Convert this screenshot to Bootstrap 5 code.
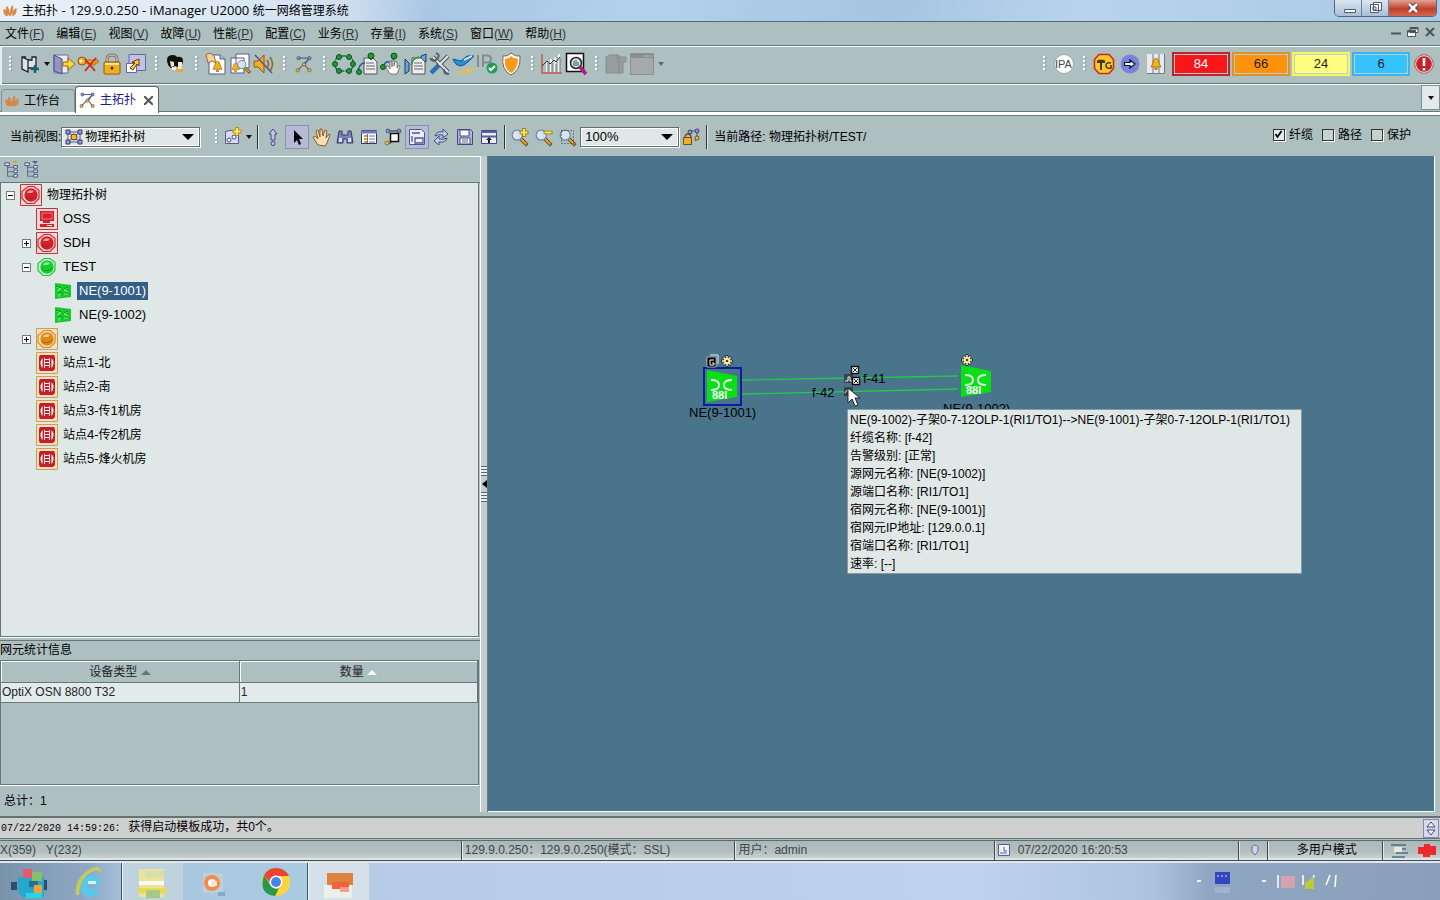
<!DOCTYPE html>
<html lang="zh-CN">
<head>
<meta charset="utf-8">
<meta name="viewport" content="width=device-width, initial-scale=1">
<title>主拓扑 - 129.9.0.250 - iManager U2000 统一网络管理系统</title>
<link href="https://cdn.jsdelivr.net/npm/bootstrap@5.3.0/dist/css/bootstrap.min.css" rel="stylesheet">
<style>
:root{--face:#adbfbe;--edge:#66787a;--pane:#e0e7e7;--map:#4a748b;--sel:#335f87}
body{font-family:"Liberation Sans","Noto Sans CJK SC",sans-serif;font-size:12px;line-height:18px;color:#000;background:var(--face);white-space:nowrap;overflow-x:hidden}
svg{display:block;flex:none}
.en{font-size:13px}
a{color:inherit;text-decoration:none}
.titlebar{height:22px;padding-left:3px;background:linear-gradient(100deg,#e9f1f8 0,#dde9f5 14%,#cfdff0 24%,#a9c6e4 30%,#b3d0ec 45%,#a6c5e3 62%,#b9d3ec 75%,#a9c9e6 100%);border-bottom:1px solid #55687a;font-family:"Open Sans","Noto Sans CJK SC",sans-serif}
.winbtns{height:17px;align-self:flex-start;border:1px solid #55677a;border-top:0;border-radius:0 0 5px 5px;overflow:hidden;margin-right:3px}
.winbtns .btn{border:0;border-radius:0;padding:0;height:16px;width:27px;background:linear-gradient(#dbe6f1,#a9bfd5);border-right:1px solid #6e8297}
.winbtns .btn.win-close{width:47px;border:0;background:linear-gradient(#e2a293,#c0402c 55%,#d5674e)}
.btn{--bs-btn-border-radius:0;--bs-btn-padding-x:0;--bs-btn-padding-y:0;--bs-btn-font-size:12px}
.menubar{height:25px;padding-left:5px;border-bottom:1px solid #fff;box-shadow:inset 0 -1px var(--edge)}
.menubar .nav-link{padding:0;margin-right:12px;color:#000;line-height:24px}
.menubar .nav-link span{color:#333}
.toolbar{height:38px;border-bottom:1px solid #fff;border-left:2px solid #e8eeee;box-shadow:inset 0 -1px var(--edge)}
.tool{width:24px;height:24px;display:flex;align-items:center;justify-content:center;border:0;background:none}
.tool.wide{width:28px}
.tool.slim{width:10px}
.tool.on{background:#b7bad6;border:1px solid #8c8fb4}
.grip{width:16px;height:16px;background:repeating-linear-gradient(#fff 0 2px,transparent 2px 4px) 7px 0/2px 16px no-repeat,repeating-linear-gradient(#8c9c9c 0 2px,transparent 2px 4px) 9px 1px/1px 16px no-repeat}
.viewbar .grip{width:12px}
.caret-down{width:0;border:3px solid transparent;border-top:4px solid #111;border-bottom:0}
.vsep{width:2px;height:24px;border-left:1px solid #333;border-right:1px solid #dfe8e8;margin:0 2px 0 3px}
.alarm{width:58px;height:24px;margin-right:2px;padding:2px;background:var(--frame);border:0}
.alarm span{display:block;height:20px;line-height:18px;border:1px solid #bcc;background:var(--fill);font-size:13px;color:#222}
.tabstrip{height:31px;padding-left:1px;border-bottom:1px solid var(--edge);background:linear-gradient(#fff,#fff) 0 100%/100% 3px no-repeat,linear-gradient(var(--edge),var(--edge)) 0 26px/100% 1px no-repeat}
.tabstrip .nav-link{border:1px solid #84959a;border-bottom:0;border-radius:4px 4px 0 0;padding:0 0 0 3px;color:#000;height:23px;width:74px;display:flex;align-items:center;background:var(--face);margin:0;align-self:flex-start;margin-top:4px}
.tabstrip .nav-link.active{background:#fff;border-color:#56666c;color:#1a1a8c;width:84px;height:27px;margin-top:1px}
.tabmenu{width:19px;height:25px;background:#e4e9e9;border:1px solid #808f92}
.viewbar{height:40px;padding:2px 0 0 10px}
.pickwrap{position:relative;border:1px solid #5f7071;box-shadow:inset 0 0 0 1px #fff,1px 1px #fff;height:20px;background:var(--pane)}
.pickwrap::after{content:"";position:absolute;right:5px;top:6px;border:6px solid transparent;border-top-color:#000;border-bottom:0;pointer-events:none}
.pickwrap svg{position:absolute;left:3px;top:1px;pointer-events:none}
.pickwrap .form-select{border:0;background:none;border-radius:0;padding:0 20px 0 4px;height:18px;line-height:18px;font-size:12px;color:#000;width:100%}
.pickwrap .form-select.en{font-size:13px}
.pickwrap .form-select.iconed{padding-left:23px}
.viewpick{width:139px}
.zoompick{width:99px}
.optbox{gap:9px;padding:0 29px 5px 0}
.optbox .form-check-input{width:12px;height:12px;margin:0 4px 0 0;float:none;border:1px solid #333;border-radius:0;background-color:#c4d2d0;box-shadow:1px 1px #fff}
.optbox .form-check-input:checked{background-color:#e6ecec;background-image:url("data:image/svg+xml,%3Csvg xmlns='http://www.w3.org/2000/svg' viewBox='0 0 9 9'%3E%3Cpath d='M1.5 4l2 3 4-6' fill='none' stroke='%23000' stroke-width='1.8'/%3E%3C/svg%3E");background-size:9px}
.sidepane{width:481px;border-top:1px solid #fff;border-right:1px solid #fff}
.treebar{height:26px;border-bottom:1px solid var(--edge);padding:0 4px}
.treebox{border:1px solid var(--edge);border-top:0;background:var(--pane);flex:1 1 auto;margin-right:1px;box-shadow:0 1px #fff;overflow:hidden}
.treebox ul{list-style:none;margin:0;padding:0}
.treebox ul ul{padding-left:16px}
.trow{height:24px;display:flex;align-items:center;padding-left:5px}
.twist{width:9px;height:9px;border:1px solid #777;background:#fff;padding:0;margin-right:5px;display:block;position:relative}
.twist::before,.twist.plus::after{content:"";position:absolute;left:1px;top:3px;width:5px;height:1px;background:#000}
.twist.plus::after{transform:rotate(90deg)}
.leaf{width:14px;flex:none}
.trow a{padding:0 2px;margin-left:3px;height:18px}
.trow a.picked{background:var(--sel);color:#fff}
.statpane{margin-top:3px;border-top:1px solid var(--edge);flex:0 0 172px}
.stattitle{height:19px;line-height:19px}
.gridbox{height:125px;border:1px solid var(--edge);box-shadow:0 1px #fff;margin-right:1px}
.gridbox .table{--bs-table-bg:transparent;margin:0;table-layout:fixed;line-height:18px}
.gridbox th{font-weight:400;padding:0;height:21px;line-height:20px;text-align:center;background:var(--face);border:solid var(--edge);border-width:0 1px 1px 0;box-shadow:inset 1px 1px #fff}
.gridbox td{padding:0 0 0 1px;height:20px;background:#e2eaea;border:solid var(--edge);border-width:0 1px 1px 0}
.sortmark{display:inline-block;border:5px solid transparent;border-top:0;border-bottom-color:#66787a;vertical-align:1px}
.sortmark.pale{border-bottom-color:#f2f7f7}
.statsum{padding:7px 4px 0}
.splitter{width:7px;background:#c3cccd;border-right:1px solid #6e767e;display:flex;flex-direction:column;align-items:center;justify-content:center}
.splitter .ridge{width:6px;height:10px;background:repeating-linear-gradient(#5a686a 0 1px,#e6eded 1px 3px)}
.splitter .arrow{border:4px solid transparent;border-right:5px solid #000;border-left:0;margin:4px 0}
.mapview{background:var(--map);position:relative;overflow:hidden;border-right:1px solid #fff;border-bottom:1px solid #fff;margin-right:5px}
.mapview>*{position:absolute}
.mapnode{width:64px;text-align:center;line-height:14px}
.tip{left:360px;top:254px;padding:1px 3px 0 2px;min-width:453px;background:var(--pane);box-shadow:0 0 0 1px #8c9a9e}
.msgbar{height:23px;margin-top:4px;padding-left:1px;border-top:2px solid #657173;border-bottom:1px solid #6a7376;background:#cfd0d0}
.msgbar .stamp{font-family:"Liberation Mono","Noto Sans CJK SC",monospace;font-size:10px}
.spin{width:16px;height:19px;margin-right:1px;background:#d7d9ef;border:1px solid #8587aa}
.statusbar{height:21px;margin-top:1px;border-bottom:1px solid #3f4e50;box-shadow:inset 0 1px #5f6c6f,inset 0 -2px #dfe5e5;background:linear-gradient(#a9b8b7,#b4c0bf 60%,#cfd6d6);color:#3b4747}
.cell{border-left:1px solid #3f4a4c;box-shadow:inset 1px 0 #e4eaea;padding-left:3px;height:19px;overflow:hidden;display:flex;align-items:center}
.c-xy{width:32%}.c-host{width:19%}.c-time{width:17%}.c-lock{width:2%}.c-mode{width:8%}.c-net{width:4%}
.taskbar{height:39px;border-top:2px solid #dfe7ec;background:linear-gradient(90deg,#7893aa 0,#8fa7c4 6%,#a9c6e0 9%,#a9cbe0 21%,#c5d6e8 25.4%,#b6cbe6 25.6%,#bad0ea 50%,#bcd2ee 68%,#adc4df 80%,#8fa6c2 84%,#8aa0ba 100%)}
.taskbar .btn{border:0;height:37px;width:62px;display:flex;align-items:center;justify-content:center;border-radius:0}
.taskbar .btn:first-child{width:59px}
.taskbar .btn.framed{border-left:1px solid #42525e;box-shadow:inset 1px 0 #eef4f8;background:#bfd3df}
.taskbar .btn.current{background:#d5e0ea}
</style>
</head>
<body class="d-flex flex-column min-vh-100">

<svg width="0" height="0" class="position-absolute" aria-hidden="true">
  <symbol id="flame" viewBox="0 0 16 14"><path d="M1 5q3 1 4 7Q0 12 1 5zM4 2q3 3 3 10Q2 8 4 2zM8 12Q7 6 10 1q2 5-2 11zM10 12q0-6 4-8 1 7-4 8z" fill="#eb8b35" stroke="#c66a2a" stroke-width=".5"/></symbol>
  <symbol id="topo" viewBox="0 0 20 20"><path d="M4 3.500h12L3 17M10 10l6 7M16 3.500l-5 7" fill="none" stroke="#555f9a" stroke-width="1.2"/><g fill="#8d95c4" stroke="#3b406e" stroke-width=".8"><circle cx="4" cy="3.500" r="1.800"/><circle cx="16" cy="3.500" r="1.800"/></g><g fill="#f2bd34" stroke="#704e18" stroke-width=".8"><circle cx="10" cy="10.500" r="1.800"/><circle cx="3" cy="17" r="1.800"/><circle cx="16" cy="17" r="1.800"/></g></symbol>
  <symbol id="ball" viewBox="0 0 22 22"><path d="M8 2.5h6l5 4v8l-5 5H7l-5-5v-7z" fill="none" stroke="currentColor" stroke-width="1.2"/><circle cx="11" cy="11" r="6.7" fill="currentColor"/><path d="M7 9q1-4 7-2l-2 2z" fill="#fff" opacity=".55"/><path d="M6 13q5 4 10-1" fill="none" stroke="#522" stroke-width=".8" opacity=".5"/></symbol>
  <symbol id="boxed" viewBox="0 0 22 22"><path d="M.5.5h21v21H.5z" fill="#f3d9d6" stroke="#c6303a"/><use href="#ball"/></symbol>
  <symbol id="site" viewBox="0 0 22 22"><path d="M.5.5h21v21H.5z" fill="#efe0c6" stroke="#d99a45"/><path d="M4 3h14l1 2v12l-2 2H4l-1-2V5z" fill="#c61f2a"/><path d="M6.500 6q-4 5 0 10zM15.500 6q4 5 0 10z" fill="#fff"/><path d="M8.500 6v10m5-10v10" stroke="#fff" stroke-width=".8"/><path d="M9 7.500h4M9 10.500h4M9 13.500h4" stroke="#fff"/></symbol>
  <symbol id="nemini" viewBox="0 0 18 18"><path d="M1 1l16 2v12L1 17z" fill="#16c92b"/><path d="M3 5l4 2-4 2m10-3-3 2 4 2M4 12h3m3 0h4M4 14h2" stroke="#8fee8f" fill="none"/><path d="M2 4l5 2m3 1 4-2M4 11h4m3 0h3" stroke="#0b7d18" stroke-width=".8"/></symbol>
  <symbol id="ne" viewBox="0 0 32 34"><path d="M1 1l30 6v21L1 33z" fill="#08df17"/><path d="M5 11q8 0 8 5t-8 5M26 11q-8 0-8 5t8 5" fill="none" stroke="#e9ffe9" stroke-width="1.8"/></symbol>
  <symbol id="gear" viewBox="0 0 12 12"><path d="M6 0v12M0 6h12M2 2l8 8m0-8-8 8" stroke="#33331e" stroke-width="2.600"/><path d="M6 1v10M1 6h10M2.500 2.500l7 7m0-7-7 7" stroke="#f8f2b8" stroke-width="1.500"/><circle cx="6" cy="6" r="3" fill="#f8f2b8"/><circle cx="6" cy="6" r="1.300" fill="#41412d"/></symbol>
  <symbol id="doc" viewBox="0 0 24 24"><path d="M8 6h9l4 4v12H8z" fill="#eee" stroke="#555"/><path d="M10 11h8M10 14h9M10 17h9" stroke="#666"/></symbol>
  <symbol id="lens" viewBox="0 0 24 24"><path d="M13 14l7 7" stroke="#6c4a16" stroke-width="4"/><path d="M13 14l6 6" stroke="#e9a837" stroke-width="2"/><circle cx="9" cy="10" r="5.500" fill="#d6e5f5" stroke="#7180a5" stroke-width="1.300"/></symbol>
  <symbol id="bell" viewBox="0 0 12 12"><path d="M6 0q3 1 3 5l2 4H1l2-4q0-4 3-5zM5 10h2v2H5z" fill="#f6b21b" stroke="#8d5a0d" stroke-width=".7"/></symbol>
  <symbol id="treeic" viewBox="0 0 18 20"><path d="M4 4v13h7M4 7h7M4 12h7" fill="none" stroke="#566295"/><path d="M1 2h5v3H1zM11 5h4v3h-4zM11 10h4v3h-4zM11 15h4v3h-4z" fill="#e9ecf8" stroke="#3c4678"/></symbol>
</svg>

<header>
  <div class="titlebar d-flex align-items-center">
    <svg class="me-1" width="15" height="14"><use href="#flame"/></svg>
    <div>主拓扑<span class="en"> - 129.9.0.250 - iManager U2000 </span>统一网络管理系统</div>
    <div class="winbtns d-flex ms-auto">
      <button class="btn" aria-label="最小化"><svg width="27" height="16"><path d="M9.500 9.500h11v3h-11z" fill="#fff" stroke="#4d5b6b"/></svg></button>
      <button class="btn" aria-label="还原"><svg width="27" height="16"><path d="M11.500 2.500h8v8h-8zM8.500 4.500h8v8h-8zM11 7h3v3h-3z" fill="#f6f8fa" stroke="#4d5b6b"/></svg></button>
      <button class="btn win-close" aria-label="关闭"><svg width="47" height="16"><path d="M20 4l8 8m0-8-8 8" stroke="#5c2c2c" stroke-width="4.500"/><path d="M20 4l8 8m0-8-8 8" stroke="#fff" stroke-width="2.600"/></svg></button>
    </div>
  </div>

  <nav class="menubar d-flex align-items-start">
    <div class="nav flex-nowrap">
      <a class="nav-link" href="#">文件<span>(<u>F</u>)</span></a>
      <a class="nav-link" href="#">编辑<span>(<u>E</u>)</span></a>
      <a class="nav-link" href="#">视图<span>(<u>V</u>)</span></a>
      <a class="nav-link" href="#">故障<span>(<u>U</u>)</span></a>
      <a class="nav-link" href="#">性能<span>(<u>P</u>)</span></a>
      <a class="nav-link" href="#">配置<span>(<u>C</u>)</span></a>
      <a class="nav-link" href="#">业务<span>(<u>R</u>)</span></a>
      <a class="nav-link" href="#">存量<span>(<u>I</u>)</span></a>
      <a class="nav-link" href="#">系统<span>(<u>S</u>)</span></a>
      <a class="nav-link" href="#">窗口<span>(<u>W</u>)</span></a>
      <a class="nav-link" href="#">帮助<span>(<u>H</u>)</span></a>
    </div>
    <svg class="ms-auto mt-1 me-1" width="46" height="14"><path d="M1 7.500h10" stroke="#4b5657" stroke-width="2"/><path d="M20 1.500h8v5h-8zM17.500 4.500h8v6h-8z" fill="#fff" stroke="#4b5657"/><path d="M17 5.500h9M20 2.500h8" stroke="#4b5657" stroke-width="2"/><path d="M36 2l8 8m0-8-8 8" stroke="#4b5657" stroke-width="2"/></svg>
  </nav>

  <div class="toolbar d-flex align-items-center pb-1">
    <i class="grip"></i>
    <button class="tool btn" aria-label="新建"><svg width="24" height="24"><path d="M8 5H4v12l6 3V8l-6-3M10 8h4V5h4v11h-8" fill="#dce3ee" stroke="#222" stroke-width="1.300"/><path d="M17 13v8M13 17h8" stroke="#17626d" stroke-width="2.500"/></svg></button>
    <button class="tool slim btn" aria-label="更多"><i class="caret-down"></i></button>
    <button class="tool btn" aria-label="注销"><svg width="24" height="24"><path d="M2 3h14v18H2z" fill="#eceaf8" stroke="#6c6c90"/><path d="M2 3l8 4v15l-8-3z" fill="#8f93c6" stroke="#4b4e7c"/><path d="M11 10h5V6l7 6-7 6v-4h-5z" fill="#ffd733" stroke="#8c6d12"/></svg></button>
    <button class="tool btn" aria-label="取消锁定"><svg width="24" height="24"><circle cx="6" cy="9" r="4" fill="#f6ac1d" stroke="#8d5a0d"/><circle cx="5" cy="9" r="1.500" fill="#fff"/><path d="M10 8h12v3h-3v2h-3v-2h-6z" fill="#f6ac1d" stroke="#8d5a0d" stroke-width=".7"/><path d="M9 7l10 12M20 6L9 19" stroke="#d8201a" stroke-width="1.800"/></svg></button>
    <button class="tool btn" aria-label="锁定"><svg width="24" height="24"><path d="M7 11V7q0-4 5-4t5 4v4" fill="none" stroke="#7c7360" stroke-width="3"/><path d="M7 11V7q0-4 5-4t5 4v4" fill="none" stroke="#e2dccb"/><rect x="4" y="10" width="16" height="12" rx="1" fill="#f2ad23" stroke="#8a5c10"/><path d="M5 12h14" stroke="#ffe08c" stroke-width="2"/><circle cx="12" cy="16" r="1.500" fill="#4e3206"/></svg></button>
    <button class="tool btn" aria-label="切换"><svg width="24" height="24"><path d="M5 2.500h16.500v16H5z" fill="#c0c1e4" stroke="#6466a0"/><path d="M2.500 11.500h10v9h-10z" fill="#fff" stroke="#6466a0"/><path d="M6 16l5-5-3-1 7-3v7l-2-2-4 6z" fill="#ffc83a" stroke="#5a3a10"/></svg></button>
    <i class="grip"></i>
    <button class="tool btn" aria-label="用户"><svg width="24" height="24"><path d="M3 8q0-5 6-5 3 0 4 2 6-1 6 4v6h-5l-3-1-4 2q-4-3-4-8z" fill="#111"/><path d="M6 9l4 1v4l-3 1zM14 10h4l1 4-2 3h-3z" fill="#f5e6c8"/><path d="M8 15h4v3H8z" fill="#e9f2f4"/><path d="M12 17h7v3h-7z" fill="#e0ab40"/></svg></button>
    <i class="grip"></i>
    <button class="tool btn" aria-label="当前告警"><svg width="24" height="24"><path d="M5 3h11l5 4v15H5z" fill="#fff" stroke="#555a88"/><path d="M16 3v4h5" fill="#b9bfe0" stroke="#555a88"/><path d="M2 3q4-4 8 1l2 7-4-2-4 2z" fill="#f3cfa2" stroke="#a56833"/><use href="#bell" x="8" y="9" width="11" height="11"/></svg></button>
    <button class="tool btn" aria-label="浏览告警"><svg width="24" height="24"><path d="M8 2h13v14H8zM3 6h13v15H3z" fill="#fff" stroke="#555a88"/><use href="#bell" x="3" y="11" width="9" height="9"/><use href="#lens" x="7" y="5" width="18" height="18"/></svg></button>
    <button class="tool btn" aria-label="静音"><svg width="24" height="24"><path d="M2 9h4l6-6v18l-6-6H2z" fill="#f5ae23" stroke="#8d5a0d"/><path d="M15 8q3 4 0 8m3-11q5 7 0 14" fill="none" stroke="#9a6410" stroke-width="1.500"/><path d="M3 3l17 18" stroke="#50549a" stroke-width="1.500"/></svg></button>
    <i class="grip"></i>
    <button class="tool btn" aria-label="主拓扑"><svg width="18" height="18"><use href="#topo"/></svg></button>
    <i class="grip"></i>
    <button class="tool btn" aria-label="环网"><svg width="24" height="24"><rect x="3" y="4" width="18" height="15" rx="6" fill="none" stroke="#2d5d84" stroke-width="1.500" stroke-dasharray="5 1"/><g fill="#1f9c2e" stroke="#0a5116"><circle cx="7" cy="5" r="2.500"/><circle cx="17" cy="5" r="2.500"/><circle cx="3" cy="12" r="2.500"/><circle cx="21" cy="12" r="2.500"/><circle cx="7" cy="19" r="2.500"/><circle cx="17" cy="19" r="2.500"/></g></svg></button>
    <button class="tool btn" aria-label="路径管理"><svg width="24" height="24"><use href="#doc" width="24" height="24"/><path d="M2 20q1-9 7-9M15 4v4" fill="none" stroke="#245b9a" stroke-width="1.500"/><g fill="#1f9c2e" stroke="#0a5116"><circle cx="3" cy="20" r="2.500"/><circle cx="15" cy="4" r="3"/></g></svg></button>
    <button class="tool btn" aria-label="路径创建"><svg width="24" height="24"><path d="M3 15q2-6 6-5 5 1 5-6" fill="none" stroke="#245b9a" stroke-width="1.500"/><g fill="#1f9c2e" stroke="#0a5116"><circle cx="3" cy="15" r="2.500"/><circle cx="14" cy="4" r="3"/></g><path d="M10 22l-4-7 2-1 2 3V9h2v6-7h2v6l1-5 2 1v6l2-3 1 1-3 8z" fill="#fff" stroke="#666" stroke-width=".8"/></svg></button>
    <button class="tool btn" aria-label="路径文档"><svg width="24" height="24"><path d="M1 7l4 4v8l-4 3zM17 4l5-2v8l-5-2z" fill="#6ea5d9" stroke="#173b6e"/><use href="#doc" width="24" height="24"/><path d="M7 13q2-7 8-8" stroke="#209a38" fill="none" stroke-width="1.500"/></svg></button>
    <button class="tool btn" aria-label="工具"><svg width="24" height="24"><path d="M5 5l15 15M20 4L4 20" stroke="#48525d" stroke-width="4"/><path d="M5 5l15 15M20 4L11 13" stroke="#e3e7eb" stroke-width="2"/><path d="M10 14l-7 7" stroke="#2275bd" stroke-width="4"/><path d="M2 6q3 5 7 1t-1-6M16 17q-1 5 5 5" fill="none" stroke="#56606a" stroke-width="2"/></svg></button>
    <button class="tool btn" aria-label="巡检"><svg width="24" height="24"><path d="M2 19q8 1 12-2l9-2q-2 6-11 7-6 0-10-3z" fill="#dfc060"/><path d="M1 7l8 2 6-5h7l-5 5q-5 5-9 5-5-1-7-7z" fill="#2a8ed0" stroke="#13578c"/><path d="M12 8l8-4" stroke="#dff0ff" stroke-width="1.500"/></svg></button>
    <button class="tool btn" aria-label="IP"><svg width="24" height="24"><path d="M2 3v12M7 15V3.500h4q4 0 4 3.500t-4 3.500H8" fill="none" stroke="#858b91" stroke-width="2"/><circle cx="16" cy="16" r="5.500" fill="#1f9f54"/><path d="M13 16l2 2 4-4" fill="none" stroke="#fff" stroke-width="2"/></svg></button>
    <button class="tool btn" aria-label="安全"><svg width="24" height="24"><path d="M11 1q4 4 9 3 1 14-9 19Q1 18 3 4q5 1 8-3z" fill="#fff" stroke="#786650"/><path d="M11 4q3 3 7 2.500Q18 17 11 21 4 17 5 6.500 9 7 11 4z" fill="#fa9819"/></svg></button>
    <i class="grip"></i>
    <button class="tool btn" aria-label="性能"><svg width="24" height="24"><path d="M2 2v19h20" stroke="#c05a46" fill="none" stroke-width="1.500"/><path d="M7 20V9m4 11V7m4 13V5m4 15V2" stroke="#eef2f2" stroke-width="2"/><path d="M2 14l5-5 3 3 4-4 2 2 4-5" fill="none" stroke="#333"/><path d="M8 20V10m4 10v-9m4 9v-8m4 8V6" stroke="#777"/></svg></button>
    <button class="tool btn" aria-label="查询"><svg width="24" height="24"><path d="M2.500 1.500h17v18h-17z" fill="#fff" stroke="#111" stroke-width="1.500"/><circle cx="12" cy="11" r="5.500" fill="#cfe1e9" stroke="#222" stroke-width="1.500"/><path d="M10 14V9m2 5V8m2 6v-4" stroke="#456"/><path d="M16 15l6 7" stroke="#b51b85" stroke-width="3.500"/></svg></button>
    <i class="grip"></i>
    <button class="tool btn" aria-label="部署" disabled><svg width="24" height="24"><path d="M2 5l4-2h9v18H2zM13 5h9v5h-3v11h-4V10h-2z" fill="#8c8c8c" stroke="#777"/></svg></button>
    <button class="tool wide btn" aria-label="窗口" disabled><svg width="24" height="24"><path d="M.5 1.500h23v21H.5z" fill="#a0a0a0" stroke="#777"/><path d="M1 4h22" stroke="#787878" stroke-width="4"/><path d="M14 4h8" stroke="#c6c6c6" stroke-dasharray="2 1"/></svg></button>
    <button class="tool slim btn" aria-label="更多"><i class="caret-down opacity-50"></i></button>

    <i class="grip ms-auto"></i>
    <button class="tool btn" aria-label="IPA"><svg width="22" height="22"><circle cx="11" cy="11" r="9.500" fill="#fff" stroke="#9aa"/><text x="2" y="15" font-size="11" fill="#444">IPA</text></svg></button>
    <i class="grip"></i>
    <button class="tool btn" aria-label="TC"><svg width="22" height="22"><path d="M6 1.500h10l4.500 5v9l-4.500 5H6l-4.500-5v-9z" fill="#fcc928" stroke="#d5281b" stroke-width="1.600"/><path d="M4 7.500q4-2 8 0v2.500H9v7H7v-7H4z" fill="#433b17"/><path d="M18 10q-5-1-5 2.500t5 2.500v-3" fill="none" stroke="#433b17" stroke-width="1.600"/></svg></button>
    <button class="tool wide btn" aria-label="跳转"><svg width="20" height="20"><circle cx="10" cy="10" r="9.500" fill="#7b82dd"/><path d="M4.500 8.500H10V6l5 4-5 4v-2.500H4.500z" fill="#f4f4ff" stroke="#111" stroke-width="1.200"/></svg></button>
    <button class="tool btn me-1" aria-label="告警"><svg width="18" height="20"><path d="M0 0h18v20H0z" fill="#e7e8f1" /><path d="M6 0v20M12 0v20M17.500 0v19.500H0" stroke="#777" fill="none"/><use href="#bell" x="3" y="4" width="12" height="12"/></svg></button>
    <button class="btn alarm" style="--frame:#bb2630;--fill:#fb1418"><span class="text-white">84</span></button>
    <button class="btn alarm" style="--frame:#dd9032;--fill:#ff9208"><span>66</span></button>
    <button class="btn alarm" style="--frame:#f7f665;--fill:#fffd7e"><span>24</span></button>
    <button class="btn alarm" style="--frame:#36b6ee;--fill:#35c3ff"><span>6</span></button>
    <button class="tool btn me-1" aria-label="紧急"><svg width="20" height="20"><circle cx="10" cy="10" r="8.500" fill="#c8202b" stroke="#f3d9d9" stroke-width="1.300"/><circle cx="10" cy="10" r="9.300" fill="none" stroke="#84333a" stroke-width=".7"/><path d="M10 4v8M10 14v2.500" stroke="#fff" stroke-width="2.600"/></svg></button>
  </div>

  <div class="tabstrip nav nav-tabs flex-nowrap">
    <a class="nav-link" href="#"><svg width="15" height="13" class="me-1"><use href="#flame"/></svg>工作台</a>
    <a class="nav-link active" href="#"><svg width="17" height="18" class="me-1"><use href="#topo"/></svg>主拓扑<svg width="9" height="9" class="ms-2"><path d="M0 0l9 9m0-9-9 9" stroke="#555" stroke-width="2"/></svg></a>
    <button class="tabmenu btn ms-auto d-flex align-items-center justify-content-center" aria-label="标签列表"><i class="caret-down"></i></button>
  </div>

  <div class="viewbar d-flex align-items-center">
    <label for="view">当前视图:</label>
    <div class="pickwrap viewpick"><svg width="18" height="16" viewBox="0 0 18 16"><path d="M3 3l12 10M15 3L3 13M3 3h12v10H3z" stroke="#4c5590" fill="none"/><circle cx="9" cy="8" r="3" fill="#f2bd34" stroke="#553c10"/><g fill="#959dd0" stroke="#343b70"><path d="M1 1h4v4H1zM13 1h4v4h-4zM1 11h4v4H1zM13 11h4v4h-4z"/></g></svg><select id="view" class="form-select iconed"><option>物理拓扑树</option></select></div>
    <i class="grip ms-2"></i>
    <button class="tool btn" aria-label="新建视图"><svg width="20" height="20"><path d="M3.500 4.500L8 3.500h8.500v13h-13z" fill="#d8dbf1" stroke="#555a94"/><circle cx="7" cy="13" r="2" fill="#fff" stroke="#444a80"/><circle cx="12" cy="10" r="2" fill="#fff" stroke="#444a80"/><path d="M15 0v9M10.500 4.500h9" stroke="#b58b10" stroke-width="3.500"/><path d="M15 1v7M11.500 4.500h7" stroke="#ffe450" stroke-width="2"/></svg></button>
    <button class="tool slim btn" aria-label="更多"><i class="caret-down"></i></button>
    <i class="vsep"></i>
    <button class="tool btn" aria-label="上一层"><svg width="16" height="20"><path d="M8 2l4 5h-2v6H6V7H4z" fill="#bfc4e8" stroke="#434986"/><circle cx="8" cy="16.500" r="2" fill="#bfc4e8" stroke="#434986"/></svg></button>
    <button class="tool on btn" aria-label="选择"><svg width="16" height="20"><path d="M5 3v13l3-3 2 5 2-1-2-5h4z"/></svg></button>
    <button class="tool btn" aria-label="移动"><svg width="20" height="20"><path d="M7 18l-5-8 2-1 3 3-2-8 2-1 2 7V2h2l1 7 2-6 2 1-1 7 3-4 1 1-3 8-2 3z" fill="#f8dfb4" stroke="#8b5b25"/></svg></button>
    <button class="tool btn" aria-label="查找"><svg width="18" height="18"><path d="M3 3h3v4h6V3h3l2 12h-6v-4H7v4H1z" fill="#7b83ba" stroke="#323865"/><path d="M3 10h3v4H3zM12 10h3v4h-3z" fill="#d7dcf3"/></svg></button>
    <button class="tool btn" aria-label="过滤"><svg width="18" height="18"><path d="M1.500 2.500h15v13h-15z" fill="#fff" stroke="#323865"/><path d="M1 4h16" stroke="#7079ba" stroke-width="3"/><path d="M4 8h3m-3 3h3m-3 3h3" stroke="#d09d2f" stroke-width="2"/><path d="M7.500 6v9M9 8h6m-6 3h6m-6 3h6" stroke="#67709f"/></svg></button>
    <button class="tool btn" aria-label="缩略图"><svg width="18" height="18"><path d="M3 3h12M3 15h4V5" fill="none" stroke="#333"/><path d="M6.500 5.500h8v8h-8z" fill="#fff" stroke="#111" stroke-width="1.500"/><g fill="#828bc2" stroke="#343b70" stroke-width=".7"><circle cx="4" cy="3" r="2"/><circle cx="15" cy="3" r="2"/></g><circle cx="3" cy="15" r="2" fill="#f2bd34" stroke="#704e18" stroke-width=".7"/></svg></button>
    <button class="tool on btn" aria-label="图例"><svg width="20" height="20"><path d="M2.500 2.500h12l3 3v12h-15z" fill="#eceefc" stroke="#4e568f"/><path d="M5 6h8M5 9v6m3-4h8v5H8z" stroke="#4e568f" fill="none" stroke-width="1.300"/></svg></button>
    <button class="tool btn" aria-label="刷新"><svg width="18" height="18"><path d="M3 8q1-5 8-4V1l5 5-5 4V7q-5-1-8 1zM15 10q-1 5-8 4v3l-5-4 5-5v3q5 1 8-1z" fill="#c5caeb" stroke="#474f8a"/></svg></button>
    <button class="tool btn" aria-label="保存"><svg width="18" height="18"><path d="M1.500 1.500h13l2 2v13h-15z" fill="#aeb4dc" stroke="#434986"/><path d="M4 2h9v6H4zM4 10h10v6H4z" fill="#fff" stroke="#434986"/><path d="M6 12h6m-6 2h6" stroke="#667"/></svg></button>
    <button class="tool btn" aria-label="全屏"><svg width="18" height="18"><path d="M1.500 2.500h15v13h-15z" fill="#e9ebf7" stroke="#434986"/><path d="M1 4h16M2 8.500h14" stroke="#59619a" stroke-width="2"/><path d="M9 9l3 3h-2v3H8v-3H6z" fill="#222"/></svg></button>
    <i class="vsep"></i>
    <button class="tool btn" aria-label="放大"><svg width="22" height="22"><use href="#lens" width="22" height="22"/><path d="M15 2v9M10.500 6.500h9" stroke="#a17b12" stroke-width="3.500"/><path d="M15 3v7M11.500 6.500h7" stroke="#ffe450" stroke-width="2"/></svg></button>
    <button class="tool btn" aria-label="缩小"><svg width="22" height="22"><use href="#lens" width="22" height="22"/><path d="M10.500 6.500h9" stroke="#a17b12" stroke-width="3.500"/><path d="M11.500 6.500h7" stroke="#ffe450" stroke-width="2"/></svg></button>
    <button class="tool btn" aria-label="局部放大"><svg width="22" height="22"><use href="#lens" width="22" height="22"/><path d="M4.500 4.500h12v13h-12z" fill="none" stroke="#333" stroke-dasharray="1 2"/></svg></button>
    <div class="pickwrap zoompick"><select class="form-select en" aria-label="缩放比例"><option>100%</option></select></div>
    <button class="tool btn" aria-label="锁定拓扑"><svg width="18" height="18"><path d="M8 7V3h7v6l-2 4" fill="none" stroke="#444d85"/><circle cx="8" cy="4" r="2" fill="#959dd0" stroke="#343b70"/><circle cx="15" cy="3" r="2" fill="#959dd0" stroke="#343b70"/><circle cx="15" cy="10" r="2" fill="#f2bd34" stroke="#704e18"/><path d="M3 10q0-4 3-4t3 4" fill="none" stroke="#704e18" stroke-width="1.500"/><path d="M1.500 9.500h8v7h-8z" fill="#f2ad23" stroke="#704e18"/></svg></button>
    <i class="vsep"></i>
    <div class="ps-1">当前路径: 物理拓扑树/TEST/</div>
    <div class="optbox ms-auto d-flex">
      <div class="d-flex align-items-center"><input class="form-check-input" type="checkbox" id="fiber" checked><label for="fiber">纤缆</label></div>
      <div class="d-flex align-items-center"><input class="form-check-input" type="checkbox" id="route"><label for="route">路径</label></div>
      <div class="d-flex align-items-center"><input class="form-check-input" type="checkbox" id="protect"><label for="protect">保护</label></div>
    </div>
  </div>
</header>

<main class="d-flex flex-grow-1">
  <aside class="sidepane d-flex flex-column flex-shrink-0">
    <div class="treebar d-flex align-items-center gap-1">
      <button class="btn border-0" aria-label="展开"><svg width="16" height="20"><use href="#treeic"/><path d="M8 3l3-3 3 3z" fill="#d0a64c"/></svg></button>
      <button class="btn border-0" aria-label="折叠"><svg width="16" height="20"><use href="#treeic"/><path d="M8 1l3 3 3-3z" fill="#4d5f8f"/></svg></button>
    </div>
    <nav class="treebox">
      <ul>
        <li><div class="trow"><button class="twist" aria-label="折叠"></button><svg width="22" height="22" color="#d2202c"><use href="#boxed"/></svg><a href="#">物理拓扑树</a></div>
          <ul>
            <li><div class="trow"><i class="leaf"></i><svg width="22" height="22"><path d="M.5.5h21v21H.5z" fill="#f3d9d6" stroke="#c6303a"/><path d="M4 3h14v10H4zM7 13h7v2H7zM4 16h14v3H4z" fill="#d2202c"/><path d="M6 5h10v6H6z" fill="none" stroke="#f9b7b7" stroke-width=".6"/><path d="M11 17.500h5" stroke="#fff"/></svg><a class="en" href="#">OSS</a></div></li>
            <li><div class="trow"><button class="twist plus" aria-label="展开"></button><svg width="22" height="22" color="#d2202c"><use href="#boxed"/></svg><a class="en" href="#">SDH</a></div></li>
            <li><div class="trow"><button class="twist" aria-label="折叠"></button><svg width="22" height="22" color="#13cf2e"><use href="#ball"/></svg><a class="en" href="#">TEST</a></div>
              <ul>
                <li><div class="trow"><i class="leaf"></i><svg width="22" height="18"><use href="#nemini" x="2" width="18" height="18"/></svg><a class="en picked" href="#">NE(9-1001)</a></div></li>
                <li><div class="trow"><i class="leaf"></i><svg width="22" height="18"><use href="#nemini" x="2" width="18" height="18"/></svg><a class="en" href="#">NE(9-1002)</a></div></li>
              </ul></li>
            <li><div class="trow"><button class="twist plus" aria-label="展开"></button><svg width="22" height="22" color="#e08a12"><path d="M.5.5h21v21H.5z" fill="#efe0c6" stroke="#d99a45"/><use href="#ball"/></svg><a class="en" href="#">wewe</a></div></li>
            <li><div class="trow"><i class="leaf"></i><svg width="22" height="22"><use href="#site"/></svg><a href="#">站点<span class="en">1-</span>北</a></div></li>
            <li><div class="trow"><i class="leaf"></i><svg width="22" height="22"><use href="#site"/></svg><a href="#">站点<span class="en">2-</span>南</a></div></li>
            <li><div class="trow"><i class="leaf"></i><svg width="22" height="22"><use href="#site"/></svg><a href="#">站点<span class="en">3-</span>传<span class="en">1</span>机房</a></div></li>
            <li><div class="trow"><i class="leaf"></i><svg width="22" height="22"><use href="#site"/></svg><a href="#">站点<span class="en">4-</span>传<span class="en">2</span>机房</a></div></li>
            <li><div class="trow"><i class="leaf"></i><svg width="22" height="22"><use href="#site"/></svg><a href="#">站点<span class="en">5-</span>烽火机房</a></div></li>
          </ul></li>
      </ul>
    </nav>
    <section class="statpane">
      <div class="stattitle">网元统计信息</div>
      <div class="gridbox">
        <table class="table">
          <thead><tr><th>设备类型 <i class="sortmark"></i></th><th>数量 <i class="sortmark pale"></i></th></tr></thead>
          <tbody><tr><td>OptiX OSN 8800 T32</td><td>1</td></tr></tbody>
        </table>
      </div>
      <div class="statsum">总计：1</div>
    </section>
  </aside>
  <div class="splitter flex-shrink-0"><i class="ridge"></i><i class="arrow"></i><i class="ridge"></i></div>

  <section class="mapview flex-grow-1">
    <svg width="560" height="260" style="left:0;top:0">
      <path d="M254 224l216-4M254 238l216-5" stroke="#22c94c" stroke-width="1.300"/>
      <rect x="216" y="212" width="37" height="37" fill="none" stroke="#0b1e9c" stroke-width="2"/>
      <use href="#ne" x="218" y="213" width="32" height="34"/>
      <use href="#ne" x="472" y="208" width="32" height="34"/>
      <g font-size="11" font-weight="700" fill="#fff"><text x="224" y="243">88I</text><text x="478" y="238">88I</text></g>
      <path d="M222 199h8v9" fill="none" stroke="#eee"/><path d="M219 201h9v10h-9z" fill="#000" stroke="#ddd" stroke-width=".7"/><path d="M226 204h-4v5h4v-2h-2" fill="none" stroke="#fff"/>
      <use href="#gear" x="233" y="199" width="12" height="12"/>
      <use href="#gear" x="473" y="198" width="12" height="12"/>
      <g><path d="M356 218h9v9h-9zM356 231h9v9h-9z" fill="#33444e"/><path d="M357 225h3v-4h2v4h3M357 237q3-6 6 0" fill="none" stroke="#eee"/><path d="M363.500 210.500h7v7h-7zM364.500 221.500h7v7h-7z" fill="#fff" stroke="#111" stroke-width="1.500"/><path d="M365 212l4 4m0-4-4 4M366 223l4 4m0-4-4 4" stroke="#222"/></g>
    </svg>
    <span class="en" style="left:375px;top:214px">f-41</span>
    <span class="en" style="left:324px;top:228px">f-42</span>
    <div class="mapnode en" style="left:201px;top:250px">NE(9-1001)</div>
    <div class="mapnode en" style="left:455px;top:246px">NE(9-1002)</div>
    <div class="tip" role="tooltip">
      <div>NE(9-1002)-子架0-7-12OLP-1(RI1/TO1)--&gt;NE(9-1001)-子架0-7-12OLP-1(RI1/TO1)</div>
      <div>纤缆名称: [f-42]</div>
      <div>告警级别: [正常]</div>
      <div>源网元名称: [NE(9-1002)]</div>
      <div>源端口名称: [RI1/TO1]</div>
      <div>宿网元名称: [NE(9-1001)]</div>
      <div>宿网元IP地址: [129.0.0.1]</div>
      <div>宿端口名称: [RI1/TO1]</div>
      <div>速率: [--]</div>
    </div>
    <svg width="14" height="20" style="left:359px;top:231px"><path d="M1 1v15l4-4 3 7 3-1-3-7h5z" fill="#fff" stroke="#222"/></svg>
  </section>
</main>

<footer>
  <div class="msgbar d-flex align-items-center">
    <span><span class="stamp">07/22/2020 14:59:26：</span> 获得启动模板成功，共0个。</span>
    <button class="spin btn ms-auto" aria-label="滚动"><svg width="14" height="17"><path d="M7 2l4 5H3zM7 15l4-5H3z" fill="#fff" stroke="#3f457c"/></svg></button>
  </div>
  <div class="statusbar d-flex align-items-center">
    <div class="c-xy">X(359)&nbsp;&nbsp; Y(232)</div>
    <div class="cell c-host">129.9.0.250：129.9.0.250(模式：SSL)</div>
    <div class="cell flex-grow-1">用户：admin</div>
    <div class="cell c-time"><svg width="12" height="13" class="me-2"><path d="M.5.5h11v11H.5z" fill="#eef0fa" stroke="#566295"/><path d="M6 3v4h3M2 9h7" fill="none" stroke="#566295"/></svg>07/22/2020 16:20:53</div>
    <div class="cell c-lock justify-content-center"><svg width="10" height="14"><path d="M2 4q3-4 6 0v4l-3 4-3-3z" fill="#cfd3ea" stroke="#626b99"/></svg></div>
    <div class="cell c-mode justify-content-center text-black">多用户模式</div>
    <div class="cell c-net gap-2 justify-content-center"><svg width="20" height="15"><path d="M2 2h15M5 6h12M7 10h12M3 14h13" stroke="#4c7289" stroke-width="1.500"/><path d="M5 4h8v5H5z" fill="#ebe9db"/></svg><svg width="20" height="15"><path d="M1 4h6V1h6v2h6v9h-6v2H6v-3H1z" fill="#ed292d"/></svg></div>
  </div>
  <div class="taskbar d-flex">
    <button class="btn" aria-label="开始"><svg width="46" height="34"><path d="M4 17h6v8H4zM34 15h6v10h-6z" fill="#24526d"/><path d="M11 12h26v20H15l-4-6z" fill="#27a6cf"/><path d="M16 4h9v9h-9z" fill="#e5586d"/><path d="M25 7h10v9H25z" fill="#84c16a"/><path d="M22 16h9v6h-9z" fill="#286e91"/><path d="M27 20h8v8h-8z" fill="#f4a135"/><path d="M19 28h16v5H19z" fill="#27d4ee"/></svg></button>
    <button class="btn" aria-label="浏览器"><svg width="36" height="34"><path d="M10 28q-4-14 7-18 11-2 11 10H15q1 6 13 4-3 10-14 8z" fill="#59c8e8"/><path d="M16 16h8v3h-8z" fill="#d9f2f8"/><path d="M4 30Q2 12 20 3q9-3 9 4-4-3-10 0Q8 13 7 30z" fill="#cdc953"/></svg></button>
    <button class="btn framed" aria-label="资源管理器"><svg width="40" height="34"><path d="M6 4h25v28H6z" fill="#e9e39b"/><path d="M12 6h19v6H12z" fill="#d6deb0"/><path d="M6 16h25v4H6z" fill="#fbfbf2"/><path d="M5 23h29v5H5z" fill="#e7da58"/><path d="M13 25h14v8H13z" fill="#a6c986"/></svg></button>
    <button class="btn" aria-label="播放器"><svg width="34" height="34"><path d="M6 8h20v20H6z" fill="#bfd0da"/><circle cx="15" cy="18" r="6" fill="#fff" stroke="#f28c48" stroke-width="4"/><path d="M14 16h6v5h-6z" fill="#fae4d6"/><path d="M21 27h7v4h-7z" fill="#89a8cd"/></svg></button>
    <button class="btn" aria-label="Chrome"><svg width="30" height="32" viewBox="0 0 30 32"><circle cx="15" cy="16" r="14" fill="#ffd43a"/><path d="M3 9Q7 2 15 2q9 0 13 8H15q-6 1-6 7z" fill="#e84335"/><path d="M3 9l7 11q4 4 8 2l-4 8Q-3 28 3 9z" fill="#289750"/><circle cx="15" cy="16" r="6.500" fill="#fff"/><circle cx="15" cy="16" r="5" fill="#4285e8"/></svg></button>
    <button class="btn framed current" aria-label="U2000"><svg width="38" height="34"><path d="M4 20h28v13H4z" fill="#edf0e8"/><path d="M7 8h26v12H7z" fill="#dd8240"/><path d="M12 17h17v7H12z" fill="#f46040"/><path d="M20 22h9v5h-9z" fill="#f7a08e"/></svg></button>
    <svg class="ms-auto me-5" width="195" height="37"><path d="M0 18h4M65 18h4" stroke="#eef3f6" stroke-width="2"/><path d="M18 9h15v12H18z" fill="#3544bf"/><path d="M20 13h10" stroke="#dde" stroke-dasharray="2 2"/><path d="M18 24h15v6H18z" fill="#a2b3cd"/><path d="M81 12v13M106 12v10M117 12l-2 10M133 12l-4 10M139 12l-1 12" stroke="#fff" stroke-width="1.500"/><path d="M84 13h14v12H84z" fill="#d4a2ae"/><path d="M108 20l9-6v12h-9z" fill="#bacb34"/></svg>
  </div>
</footer>
<script src="https://cdn.jsdelivr.net/npm/bootstrap@5.3.0/dist/js/bootstrap.bundle.min.js"></script>
</body>
</html>
